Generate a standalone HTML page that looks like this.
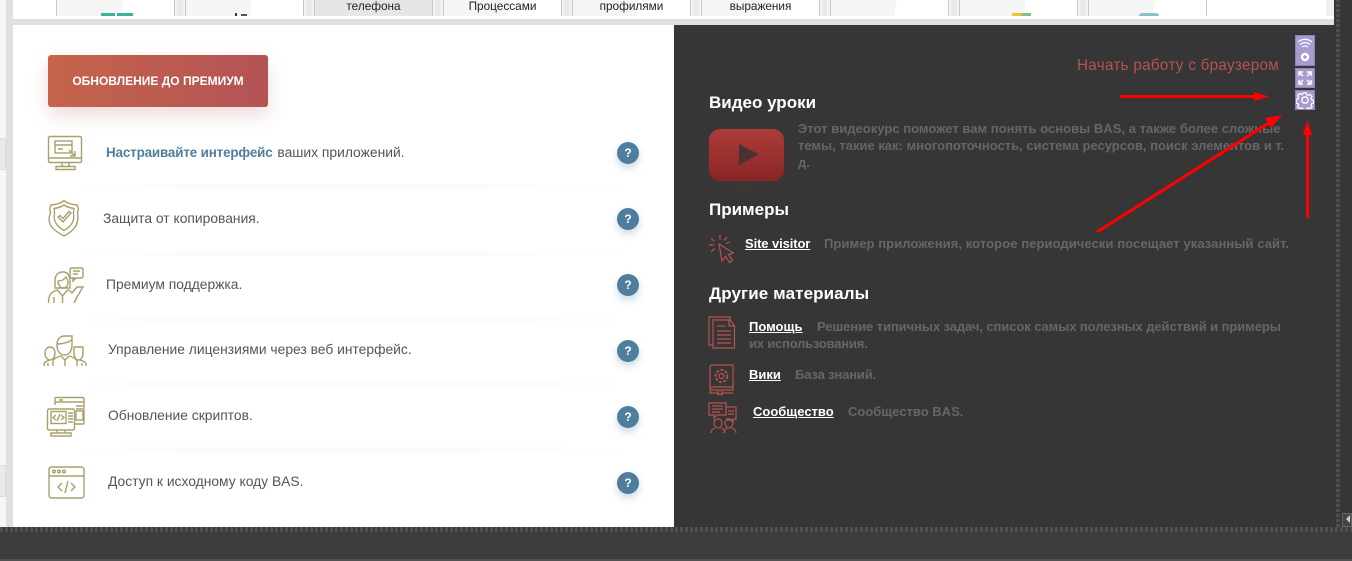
<!DOCTYPE html>
<html><head><meta charset="utf-8">
<style>
html,body{margin:0;padding:0;width:1352px;height:561px;overflow:hidden;background:#383838;font-family:"Liberation Sans",sans-serif}
div,span,a,svg{position:absolute}
.t{white-space:nowrap;line-height:16px}
span.i,a.i{position:static}
.tile{top:0;height:16px;width:117px;background:linear-gradient(100deg,#f5f5f5 0 55%,#fff 55%);border-left:1px solid #c8c8c8;border-right:1px solid #c8c8c8;font-size:11.8px;color:#222;text-align:center;line-height:12px;overflow:hidden}
.bnd{top:0;height:16px;background:linear-gradient(90deg,#f6f6f6,#e6e6e6 50%,#f6f6f6)}
.row{font-size:13.85px;color:#555;white-space:nowrap;line-height:16px}
.q{left:617px;width:22px;height:22px;border-radius:50%;background:#4f7d9e;color:#fff;font-weight:bold;font-size:12px;line-height:22px;text-align:center;box-shadow:0 4px 8px rgba(79,125,158,.3)}
.sep{left:75px;width:560px;height:6px;background:linear-gradient(90deg,#fff,#fbfbfb 20%,#fbfbfb 70%,#fff)}
.h{color:#fff;font-weight:bold;font-size:17px;white-space:nowrap;line-height:20px}
.d{color:#666;font-size:13px;font-weight:bold;white-space:nowrap;line-height:17px}
.l{color:#fff;font-size:13px;font-weight:bold;text-decoration:underline;white-space:nowrap;line-height:17px}
.ic{fill:none;stroke:#a89f6c;stroke-width:1.4}
.ir{fill:none;stroke:#b5544f;stroke-width:1.2}
.b{left:1295px;width:18px;background:#a79bd0;border:1px solid #8f84b8}
</style></head>
<body>
<!-- top strip -->
<div style="left:13px;top:0;width:1321px;height:19px;background:#fff"></div>
<div style="left:0;top:0;width:6px;height:527px;background:#f6f6f6"></div>
<div style="left:0;top:138px;width:6px;height:32px;background:#eaeaea;border:1px solid #ddd;border-left:0;box-sizing:border-box"></div>
<div style="left:0;top:465px;width:6px;height:32px;background:#eaeaea;border:1px solid #ddd;border-left:0;box-sizing:border-box"></div>
<div style="left:6px;top:0;width:7px;height:527px;background:#e0e0e0"></div>
<div style="left:13px;top:19px;width:1321px;height:6px;background:#e0e0e0"></div>

<div class="tile" style="left:56px"><div style="left:44px;top:13px;width:14px;height:3px;background:#3fb19b"></div><div style="left:60px;top:13px;width:16px;height:3px;background:#3fb19b"></div></div>
<div class="tile" style="left:185px"><div style="left:49px;top:13px;width:2px;height:3px;background:#333"></div><div style="left:55px;top:14px;width:6px;height:2px;background:#555"></div></div>
<div class="tile" style="left:314px;background:#e6e6e6;position:absolute">телефона</div>
<div class="tile" style="left:443px">Процессами</div>
<div class="tile" style="left:572px">профилями</div>
<div class="tile" style="left:701px">выражения</div>
<div class="tile" style="left:830px"></div>
<div class="tile" style="left:959px"><div style="left:52px;top:13px;width:10px;height:3px;background:#e8c23a"></div><div style="left:62px;top:13px;width:9px;height:3px;background:#7fc08e"></div></div>
<div class="tile" style="left:1088px"><div style="left:50px;top:13px;width:20px;height:3px;background:#86c2cc;border-radius:10px 10px 0 0"></div></div>
<div style="left:1207px;top:0;width:120px;height:16px;background:#fff"></div>
<div style="left:1326px;top:0;width:8px;height:16px;background:#f0f0f0"></div>
<div class="bnd" style="left:175px;width:10px"></div>
<div class="bnd" style="left:304px;width:10px"></div>
<div class="bnd" style="left:433px;width:10px"></div>
<div class="bnd" style="left:562px;width:10px"></div>
<div class="bnd" style="left:691px;width:10px"></div>
<div class="bnd" style="left:820px;width:10px"></div>
<div class="bnd" style="left:949px;width:10px"></div>
<div class="bnd" style="left:1078px;width:10px"></div>

<!-- white panel -->
<div style="left:13px;top:25px;width:661px;height:502px;background:#fff"></div>
<div style="left:48px;top:55px;width:220px;height:52px;border-radius:3px;background:linear-gradient(90deg,#c5644a,#b35356);box-shadow:0 8px 18px rgba(180,85,85,.22);color:#fff;font-weight:bold;font-size:12px;line-height:52px;text-align:center;white-space:nowrap">ОБНОВЛЕНИЕ ДО ПРЕМИУМ</div>

<div class="sep" style="top:184px"></div>
<div class="sep" style="top:250px"></div>
<div class="sep" style="top:316px"></div>
<div class="sep" style="top:381px"></div>
<div class="sep" style="top:447px"></div>

<div class="row" style="left:106px;top:144px"><a class="i" style="color:#4f7d9e;font-weight:bold;font-size:13.4px;letter-spacing:-.14px;margin-right:1px">Настраивайте интерфейс</a> ваших приложений.</div>
<div class="row" style="left:103px;top:210px">Защита от копирования.</div>
<div class="row" style="left:106px;top:276px">Премиум поддержка.</div>
<div class="row" style="left:108px;top:341px">Управление лицензиями через веб интерфейс.</div>
<div class="row" style="left:108px;top:407px">Обновление скриптов.</div>
<div class="row" style="left:108px;top:473px">Доступ к исходному коду BAS.</div>

<div class="q" style="top:142px">?</div>
<div class="q" style="top:208px">?</div>
<div class="q" style="top:274px">?</div>
<div class="q" style="top:340px">?</div>
<div class="q" style="top:406px">?</div>
<div class="q" style="top:472px">?</div>

<!-- left icons -->
<svg style="left:47px;top:135px" width="37" height="36" class="ic"><rect x="1.500" y="1.500" width="33" height="26" rx="1.500"/><path d="M1.500 23h33M15 28v3M22 28v3M9 34.500h19V31.500H9z"/><rect x="8" y="6" width="17" height="12"/><path d="M8 10h17M11 14h5"/><path d="M22 15l6 6M28 16v5h-5"/></svg>
<svg style="left:47px;top:199px" width="34" height="40" class="ic"><path d="M17 1.500c3 3 7 4 13 4.500 2 5 1 4 .5 8 2 12-4 18-13.500 23C7.500 32-1.500 26 3.500 14c-.5-4-1.500-3 .5-8 6-.5 10-1.500 13-4.500z"/><path d="M17 6c3 2 6 3 10 3.500-.5 2-.5 3-.5 5 1.500 8-2.500 13-9.500 17-7-4-11-9-9.500-17 0-2 0-3-.5-5C11 9 14 8 17 6z"/><path d="M11 18l5 5 8-9-2-1.500-6 7-3-3z"/></svg>
<svg style="left:47px;top:266px" width="38" height="38" class="ic"><path d="M8 15c0-6 3-9 8-9s7 4 7 10v6H8z"/><path d="M11 15c3 0 6-1 8-4 1 2 2 3 2 5 0 4-2.500 6-5 6s-5-3-5-7z"/><path d="M1.500 37c0-8 2-11 9-13l5 6 5-6c2 .5 3.500 1.500 4.500 3l5-6h6l-6 10-3 6"/><path d="M7 31v6M15.500 30v7"/><rect x="23" y="2" width="13" height="10" rx="1.500"/><path d="M26 5h7M26 8h5M26 12v3l3-3"/></svg>
<svg style="left:43px;top:335px" width="44" height="32" class="ic"><path d="M14 10c0-6 3-9 8-9h7v9c0 6-3 10-7.500 10S14 16 14 10z"/><path d="M14 9c5 0 10-1 15-4"/><path d="M10 31v-5c0-2 4-4 8-5l4 4 4-4c4 1 8 3 8 5v5M22 25v6"/><path d="M2 18c0-4 2.500-6 5-6s5 2 5 6-2.500 7-5 7-5-3-5-7zM1 31v-2c0-2 3-3 6-4M5 31v-3"/><path d="M31 12h9v6c0 4-2 7-4.500 7S31 22 31 18zM43 31v-2c0-2-3-3-6-4M39 31v-3"/></svg>
<svg style="left:46px;top:396px" width="40" height="42" class="ic"><path d="M9 9V2.500c0-.5.5-1 1-1h27c.5 0 1 .5 1 1V27c0 .5-.5 1-1 1h-8M9 6h29M13 4h4"/><path d="M30 10h7M30 13h7"/><rect x="30" y="15" width="7" height="9"/><rect x="1.500" y="13" width="27" height="21" rx="1.500"/><rect x="5" y="15.500" width="15" height="12"/><path d="M10 19l-3 2.500 3 2.500M15 19l3 2.500-3 2.500M14 18l-3 7M22 17h5M22 20h5M22 23h5M22 26h5"/><path d="M11 34v3M19 34v3M5 40h20v-3H5z"/></svg>
<svg style="left:48px;top:466px" width="38" height="34" class="ic"><rect x="1" y="1" width="35" height="31" rx="2.500"/><path d="M1 10h35"/><circle cx="6" cy="5.500" r="1.300"/><circle cx="11" cy="5.500" r="1.300"/><circle cx="16" cy="5.500" r="1.300"/><path d="M14 17l-4 4 4 4M23 17l4 4-4 4M20 15l-3 12"/></svg>

<!-- dark panel -->
<div style="left:674px;top:25px;width:678px;height:502px;background:#363636"></div>
<div style="left:1334px;top:0;width:18px;height:25px;background:#363636"></div>
<div style="left:1336px;top:0;width:4px;height:527px;background:repeating-linear-gradient(0deg,#4e4e4e 0 3px,#3a3a3a 3px 5px)"></div>
<div style="left:1342px;top:513px;width:10px;height:14px;background:#444;border:1px solid #666;box-sizing:border-box"></div>
<div style="left:1346px;top:515px;width:0;height:0;border-right:4px solid #ccc;border-top:4px solid transparent;border-bottom:4px solid transparent"></div>
<div style="left:0;top:527px;width:1352px;height:5px;background:repeating-linear-gradient(90deg,#505050 0 3px,#383838 3px 5px)"></div>
<div style="left:0;top:532px;width:1352px;height:29px;background:#3c3c3c"></div>
<div style="left:0;top:559px;width:1352px;height:2px;background:#505050"></div>

<div class="t" style="left:1077px;top:58px;font-size:15.25px;color:#b5544f;letter-spacing:.28px">Начать работу с браузером</div>

<div class="h" style="left:709px;top:93px">Видео уроки</div>
<div style="left:694px;top:115px;width:105px;height:85px;background:radial-gradient(closest-side,rgba(150,50,50,.16),rgba(150,50,50,0))"></div>
<div style="left:709px;top:129px;width:75px;height:52px;border-radius:11px;background:linear-gradient(180deg,#ab3d3b,#8a2525)"></div>
<svg style="left:739px;top:144px" width="21" height="21"><path d="M0 0L20 10.500L0 21z" fill="#4a3234"/></svg>
<div class="d" style="left:798px;top:120px;letter-spacing:.03px">Этот видеокурс поможет вам понять основы BAS, а также более сложные</div>
<div class="d" style="left:798px;top:137px">темы, такие как: многопоточность, система ресурсов, поиск элементов и т.</div>
<div class="d" style="left:798px;top:154px">д.</div>

<div class="h" style="left:709px;top:200px">Примеры</div>
<svg style="left:708px;top:234px" width="26" height="30" class="ir"><path d="M11 10l3 17 3.500-4.500 4 6 3-2-4-6 5-1.500z"/><path d="M12 1v5M3 4l3.500 3.500M1 11h5M3 18l3.500-3.500M19 3l-3 3.500M22 8l-4 1.500"/></svg>
<div class="l" style="left:745px;top:235px;letter-spacing:-.1px">Site visitor</div>
<div class="d" style="left:824px;top:235px;letter-spacing:.08px">Пример приложения, которое периодически посещает указанный сайт.</div>

<div class="h" style="left:709px;top:284px;letter-spacing:.1px">Другие материалы</div>
<svg style="left:708px;top:316px" width="28" height="33" class="ir"><path d="M5 29H1V1h21v3"/><path d="M5 4h17l4.500 6v22H5z"/><path d="M21 4v6h5.500"/><path d="M9 10h8M9 15h14M9 19h14M9 23h14M9 27h14"/></svg>
<div class="l" style="left:749px;top:318px">Помощь</div>
<div class="d" style="left:817px;top:318px;letter-spacing:-.08px">Решение типичных задач, список самых полезных действий и примеры</div>
<div class="d" style="left:749px;top:335px;letter-spacing:-.2px">их использования.</div>

<svg style="left:708px;top:364px" width="28" height="32" class="ir"><path d="M2 26V3c0-1 1-2 2-2h21v25"/><path d="M2 26c0-2 1-3 3-3h20v3H5c-2 0-3 1-3 2.500S3 29 5 29h5M14 29h11"/><path d="M10 27v4l2-1.500 2 1.500v-4"/><circle cx="13.500" cy="12" r="2.500"/><circle cx="13.500" cy="12" r="6" stroke-dasharray="3 1.500" stroke-width="1.800"/></svg>
<div class="l" style="left:749px;top:366px">Вики</div>
<div class="d" style="left:795px;top:366px;letter-spacing:-.15px">База знаний.</div>

<svg style="left:708px;top:402px" width="30" height="32" class="ir"><path d="M1 1h17v12H9l-3 3v-3H1z"/><path d="M18 5h10v12h-3v2l-3-2h-4"/><path d="M4 4h11M4 7h11M4 10h8M20 9h6M20 12h6"/><path d="M6 21c0-3 2-4 4-4s4 1 4 4-2 5-4 5-4-2-4-5zM3 31c0-3 2-4 4-5M17 31c0-3-2-4-4-5"/><path d="M17 21c0-3 2-3 4-3s4 1 4 3-2 5-4 5-4-2-4-5zM16 31c0-3 2-4 3-5M28 31c0-3-2-4-4-5"/></svg>
<div class="l" style="left:753px;top:403px">Сообщество</div>
<div class="d" style="left:848px;top:403px">Сообщество BAS.</div>

<!-- side buttons -->
<div class="b" style="top:35px;height:29px"></div>
<svg style="left:1296px;top:36px" width="18" height="30" fill="none" stroke="#fff" stroke-width="1.300"><path d="M2 6c4-3.500 10-3.500 14 0M4 8.500c3-2.500 7-2.500 10 0M6 11c2-1.500 4-1.500 6 0"/><circle cx="9" cy="21" r="3" stroke-width="2.400"/></svg>
<div class="b" style="top:68px;height:18px"></div>
<svg style="left:1296px;top:69px" width="18" height="18" fill="none" stroke="#fff" stroke-width="1.500"><path d="M3 7V3h4M15 7V3h-4M3 11v4h4M15 11v4h-4M3 3l4 4M15 3l-4 4M3 15l4-4M15 15l-4-4"/></svg>
<div class="b" style="top:90px;height:18px"></div>
<svg style="left:1296px;top:91px" width="18" height="18" fill="none" stroke="#fff"><circle cx="9" cy="9" r="3.200" stroke-width="1.300"/><path stroke-width="1.300" d="M7.500 1.800h3l.5 2 1.500.7 1.900-1 2 2.100-1 1.800.6 1.500 2 .6v2.900l-2 .5-.6 1.500 1 1.800-2 2.100-1.900-1-1.500.7-.5 2h-3l-.5-2-1.500-.7-1.900 1-2-2.100 1-1.800-.6-1.500-2-.5V8.500l2-.6.6-1.500-1-1.800 2-2.100 1.900 1 1.500-.7z" transform="translate(.1 .1) scale(.97)"/></svg>

<!-- red arrows -->
<svg style="left:1090px;top:85px" width="240" height="155">
<path d="M30 11.500H168" stroke="#f00" stroke-width="3"/><path d="M164 7L179 11.500L164 16z" fill="#f00"/>
<path d="M7 147L182 36" stroke="#f00" stroke-width="3"/><path d="M175 33L192 30L181 43z" fill="#f00"/>
<path d="M217.500 133V45" stroke="#f00" stroke-width="3"/><path d="M213 50L217.500 35L222 50z" fill="#f00"/>
</svg>
</body></html>
